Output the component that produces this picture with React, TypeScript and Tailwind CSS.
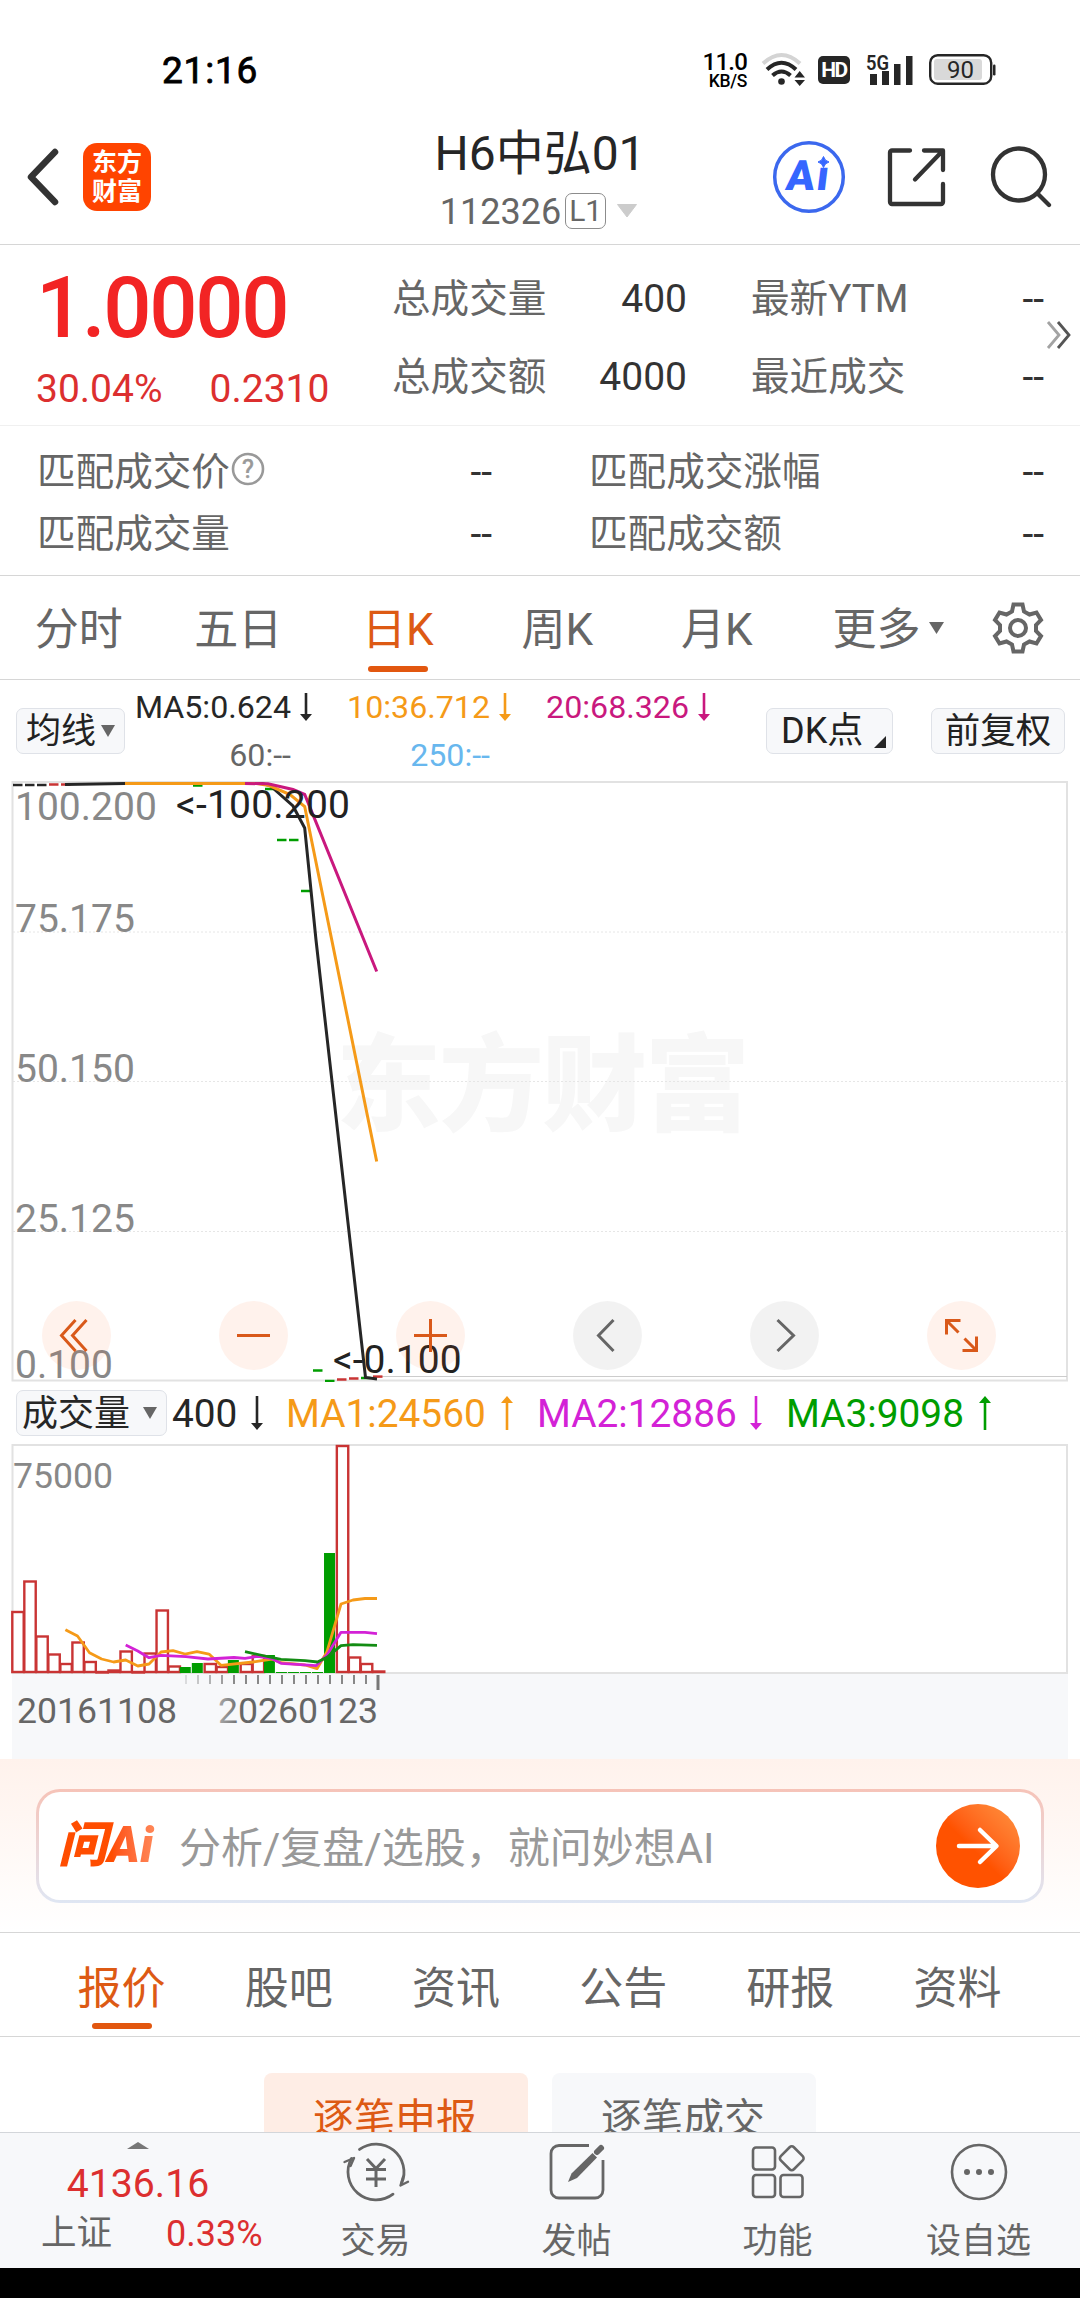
import React from 'react';
import clsx from 'clsx';

type Point = [number, number];

interface VolumeBar {
  top: number;
  up: boolean;
}

const INK = '#262626';
const ORANGE = '#f59a18';
const MAGENTA = '#c9187e';
const PURPLE = '#d322d6';
const GREEN = '#009d00';
const RED = '#c93434';

const toPath = (pts: Point[]) => pts.map((p) => p.join(',')).join(' ');

// moving averages of the daily K chart
const ma5: Point[] = [[65, 784.5], [125, 783.5], [262, 783.5], [270, 785.5], [293, 806], [304.7, 828], [316, 940], [365.5, 1377.5], [377, 1379]];
const ma10: Point[] = [[125, 783.5], [257, 783.5], [269, 785.5], [290, 794.5], [304.7, 806.5], [376.7, 1161.5]];
const ma20: Point[] = [[245, 783.5], [268, 783.8], [293, 789.5], [304.7, 794.5], [376.7, 971.5]];

// one day without a body: [x, y, colour]
const ticks: [number, number, string][] = [
  [13, 785, INK], [25, 785, INK], [37, 785, INK], [49, 784.5, RED], [61, 784.5, RED],
  [193, 785.5, GREEN], [265, 789, GREEN], [277, 840, GREEN], [289, 840, GREEN], [301, 891, GREEN],
  [313, 1370.5, GREEN], [325, 1381, GREEN], [337, 1379.5, RED], [349, 1378.5, RED], [361, 1378, GREEN], [373, 1376.6, RED],
];

const priceLabels: [string, number][] = [
  ['100.200', 819.7], ['75.175', 931.6], ['50.150', 1081.8], ['25.125', 1231.6], ['0.100', 1377.5],
];

const volumes: VolumeBar[] = [
  { top: 1612, up: true }, { top: 1581.5, up: true }, { top: 1636.5, up: true }, { top: 1654.5, up: true },
  { top: 1664, up: true }, { top: 1642.5, up: true }, { top: 1662, up: true }, { top: 1672, up: true },
  { top: 1670.5, up: true }, { top: 1651.5, up: true }, { top: 1672, up: true }, { top: 1653.5, up: true },
  { top: 1610.5, up: true }, { top: 1666.5, up: true }, { top: 1667, up: false }, { top: 1663, up: false },
  { top: 1664, up: true }, { top: 1667, up: true }, { top: 1660, up: false }, { top: 1664, up: true },
  { top: 1656, up: true }, { top: 1655, up: false }, { top: 1672, up: false }, { top: 1672, up: false },
  { top: 1672, up: false }, { top: 1672, up: false }, { top: 1553, up: false }, { top: 1446, up: true },
  { top: 1657.5, up: true }, { top: 1664, up: true }, { top: 1671.5, up: true },
];

const vma1: Point[] = [
  [65.4, 1629.7], [77.5, 1636], [89.5, 1652.7], [101.6, 1659], [113.6, 1662], [125.7, 1660], [137.8, 1666], [149, 1664],
  [161, 1652], [173, 1650.7], [185, 1654], [197, 1651.7], [209, 1654], [221, 1665.3], [253, 1662], [272, 1659],
  [281, 1662.7], [305, 1665], [317, 1668.7], [327, 1651.7], [341, 1604], [353, 1600], [365, 1598.5], [377, 1598.5],
];
const vma2: Point[] = [
  [125.7, 1645], [137.8, 1651], [149, 1657.7], [161, 1655.3], [186, 1656.7], [208, 1659], [234, 1657.5], [245, 1658.3],
  [258, 1656.3], [272, 1658.7], [281, 1663.3], [316, 1665.7], [327, 1655], [341, 1632.3], [365, 1632.3], [377, 1633.7],
];
const vma3: Point[] = [
  [245, 1651.7], [265, 1656], [281, 1659.3], [305, 1660.7], [317.5, 1662], [327, 1657.3], [341, 1645.7], [353, 1644.7], [377, 1645.3],
];

function Arrow({ up = false, height = 28 }: { up?: boolean; height?: number }) {
  return (
    <svg width="12" height={height} viewBox={`0 0 12 ${height}`} className={clsx('shrink-0', up && 'rotate-180')}>
      <path d={`M6 0V${height - 4}`} stroke="currentColor" strokeWidth="2.6" />
      <path d={`M0 ${height - 7}H12L6 ${height}Z`} fill="currentColor" />
    </svg>
  );
}

function Caret({ size = 14 }: { size?: number }) {
  return (
    <svg width={size} height="12" viewBox="0 0 14 12" preserveAspectRatio="none" className="shrink-0">
      <path d="M0 0H14L7 12Z" fill="#666" />
    </svg>
  );
}

function StatusBar() {
  return (
    <div className="flex h-[113px] items-center pt-[27px] text-black">
      <span className="ml-[162px] w-[541px] text-[37px] leading-none tracking-[0.8px] [-webkit-text-stroke:0.8px_#000]">21:16</span>
      <div className="flex h-[38px] w-[44px] flex-col items-end justify-between">
        <span className="text-[24px] leading-[22px] font-medium tracking-[-0.8px]">11.0</span>
        <span className="text-[17.5px] leading-[16px] font-medium tracking-[-0.3px]">KB/S</span>
      </div>
      <svg width="46" height="36" viewBox="0 0 46 36" fill="none" className="ml-[14px]">
        <path d="M2 11.5Q20.5 -5.5 39 11.5" stroke="#d4d4d4" strokeWidth="4" />
        <path d="M6 17.5Q20.5 4 35 17.5" stroke="#262626" strokeWidth="4" />
        <path d="M11.5 23.5Q20.5 15.5 29.5 23.5" stroke="#262626" strokeWidth="4" />
        <circle cx="20.5" cy="29.5" r="3.3" fill="#262626" />
        <path d="M33.5 25.5H44L38.7 19ZM33.5 28H44L38.7 34Z" fill="#262626" />
      </svg>
      <span className="ml-[11px] flex h-[28px] w-[32px] items-center justify-center rounded-[5px] bg-[#262626] text-[21px] leading-none font-bold tracking-[-1.5px] text-white">
        HD
      </span>
      <svg width="48" height="34" viewBox="0 0 48 34" className="ml-[16px]" fontFamily="Roboto, sans-serif">
        <text x="0" y="16.5" fontSize="20" fontWeight="600" fill="#262626" textLength="23" lengthAdjust="spacingAndGlyphs">5G</text>
        <path d="M4 21h7v11H4zM16 18h7v14h-7zM28 11h6.5v21H28zM40 3h6.5v29H40z" fill="#262626" />
      </svg>
      <svg width="68" height="32" viewBox="0 0 68 32" className="ml-[15px]" fontFamily="Roboto, sans-serif">
        <rect x="1.2" y="1.2" width="61" height="28.5" rx="7.5" fill="none" stroke="#262626" strokeWidth="2.4" />
        <rect x="5" y="5" width="48" height="21" rx="3" fill="#d9d9d9" />
        <rect x="64" y="10.5" width="2.5" height="11" rx="1.2" fill="#262626" />
        <text x="31.5" y="24" fontSize="24" textAnchor="middle" fill="#262626">90</text>
      </svg>
    </div>
  );
}

function Header() {
  return (
    <header className="flex h-[132px] items-start border-b border-[#d6d6d6] pt-[11px]">
      <div className="flex h-[106px] w-[380px] items-center">
        <svg width="34" height="58" viewBox="0 0 34 58" className="ml-[25px]" fill="none">
          <path d="M30 4L6 29L30 54" stroke="#333" strokeWidth="6.5" strokeLinecap="round" strokeLinejoin="round" />
        </svg>
        <div className="ml-[24px] flex h-[68px] w-[68px] flex-col items-center justify-center rounded-[14px] bg-[#ff4400] text-[25px] leading-[29px] font-bold text-white">
          <span>东方</span>
          <span>财富</span>
        </div>
      </div>
      <div className="flex w-[318px] flex-col items-center">
        <h1 className="flex h-[58px] items-center pt-[2px] pl-[2px] text-[48px] leading-none text-[#262626]">H6中弘01</h1>
        <div className="flex h-[58px] items-center text-[#666]">
          <span className="pt-[1px] text-[36px] leading-none">112326</span>
          <span className="ml-[4px] flex h-[36px] w-[41px] items-center justify-center rounded-[7px] border border-[#8c8c8c] text-[30px] leading-none">
            L1
          </span>
          <svg width="22" height="14" viewBox="0 0 22 14" className="ml-[10px]">
            <path d="M1.5 0.5H20.5L11 13Z" fill="#ccc" stroke="#ccc" strokeLinejoin="round" />
          </svg>
        </div>
      </div>
      <div className="flex h-[106px] items-center">
        <svg width="74" height="74" viewBox="0 0 74 74" className="ml-[74px]" fontFamily="Roboto, sans-serif">
          <circle cx="37" cy="37" r="34.3" fill="none" stroke="#3b68ee" strokeWidth="3.5" />
          <text x="19" y="50.5" fontSize="42" fontWeight="900" letterSpacing="2" transform="skewX(-7)" fill="#3566ff">Ai</text>
          <rect x="43" y="14" width="16" height="13" fill="#fff" />
          <path d="M51.5 16.5Q52.7 21 57 22Q52.7 23 51.5 27.5Q50.3 23 46 22Q50.3 21 51.5 16.5Z" fill="#3566ff" stroke="#3566ff" />
        </svg>
        <svg width="62" height="62" viewBox="0 0 62 62" className="ml-[39px]" fill="none" stroke="#333" strokeWidth="4.3" strokeLinecap="round" strokeLinejoin="round">
          <path d="M25 4.5H7A2 2 0 0 0 5 6.5V56A2 2 0 0 0 7 58H56A2 2 0 0 0 58 56V38" />
          <path d="M39 4.5H58V24M57 5.5L30 33.5" />
        </svg>
        <svg width="66" height="62" viewBox="0 0 66 62" className="ml-[42px]" fill="none" stroke="#333" strokeWidth="4.3" strokeLinecap="round">
          <circle cx="30" cy="28.5" r="26" />
          <path d="M48.5 47.5L60 59" />
        </svg>
      </div>
    </header>
  );
}

function Stat({ label, value, help = false }: { label: string; value: string; help?: boolean }) {
  return (
    <div className="flex items-center justify-between text-[39px] leading-none">
      <span className="flex items-center text-[38.6px] text-[#666]">
        <span>{label}</span>
        {help && (
          <svg width="34" height="34" viewBox="0 0 34 34" className="-mt-[7px] ml-[1px]" fontFamily="Roboto, sans-serif">
            <circle cx="17" cy="17" r="15" fill="none" stroke="#999" strokeWidth="2.6" />
            <text x="17" y="25.5" fontSize="25" textAnchor="middle" fill="#999" stroke="#999" strokeWidth="0.6">?</text>
          </svg>
        )}
      </span>
      <span className="text-[#333]">{value}</span>
    </div>
  );
}

function Quote() {
  return (
    <>
      <section className="flex h-[181px] border-b border-[#f0f0f0]">
        <div className="w-[392px] pt-[19px] text-[#f22424]">
          <div className="ml-[36px] flex h-[88px] items-center text-[85px] leading-none font-medium tracking-[-2.3px]">1.0000</div>
          <div className="mt-[5px] ml-[36px] flex h-[64px] items-center gap-[47px] text-[39px] leading-none text-[#dc2f2f]">
            <span>30.04%</span>
            <span>0.2310</span>
          </div>
        </div>
        <div className="grid grid-cols-[295px_293px] grid-rows-[78px_78px] gap-x-[64px] pt-[15px]">
          <Stat label="总成交量" value="400" />
          <Stat label="最新YTM" value="--" />
          <Stat label="总成交额" value="4000" />
          <Stat label="最近成交" value="--" />
        </div>
        <svg width="26" height="30" viewBox="0 0 26 30" className="ml-[2px] self-center" fill="none" strokeWidth="2.8">
          <path d="M2 2L13 15L2 28" stroke="#a3a3a3" />
          <path d="M12 2L23 15L12 28" stroke="#555" />
        </svg>
      </section>
      <section className="grid h-[150px] grid-cols-[455px_455px] grid-rows-[62px_62px] gap-x-[97px] border-b border-[#d6d6d6] pt-[15px] pl-[37px]">
        <Stat label="匹配成交价" value="--" help />
        <Stat label="匹配成交涨幅" value="--" />
        <Stat label="匹配成交量" value="--" />
        <Stat label="匹配成交额" value="--" />
      </section>
    </>
  );
}

function PeriodTabs() {
  const periods = ['分时', '五日', '日K', '周K', '月K'];
  return (
    <nav className="flex h-[104px] items-center border-b border-[#d6d6d6] text-[44px] leading-none text-[#666]">
      {periods.map((p) => (
        <div key={p} className="relative flex h-full w-[159.5px] items-center justify-center pt-[5px] pr-[2px]">
          <span className={clsx(p === '日K' && 'text-[#dd5a14]')}>{p}</span>
          {p === '日K' && <span className="absolute bottom-[7px] left-[49px] h-[6px] w-[60px] rounded-full bg-[#e2570f]" />}
        </div>
      ))}
      <div className="ml-[35px] flex items-center gap-[8px] pt-[5px]">
        <span>更多</span>
        <span className="-mt-[5px] flex"><Caret size={15} /></span>
      </div>
      <svg width="54" height="54" viewBox="0 0 54 54" className="ml-[47px]" fill="none" stroke="#666" strokeWidth="4">
        <path
          strokeLinejoin="miter"
          d="M22.5 3.5H31.5L33 10.5L38.5 13.5L45.5 11.5L50 19L45 24V30L50 35L45.5 42.5L38.5 40.5L33 43.5L31.5 50.5H22.5L21 43.5L15.5 40.5L8.5 42.5L4 35L9 30V24L4 19L8.5 11.5L15.5 13.5L21 10.5Z"
        />
        <circle cx="27" cy="27" r="8" />
      </svg>
    </nav>
  );
}

function MaCell({ text, color, arrow = false }: { text: string; color: string; arrow?: boolean }) {
  return (
    <div className={clsx('flex items-center', color)}>
      <span className="w-[165px] pt-[1px] text-right whitespace-nowrap">{text}</span>
      {arrow && <span className="ml-[9px]"><Arrow /></span>}
    </div>
  );
}

function MaToolbar() {
  return (
    <div className="flex h-[101px] items-center text-[#222]">
      <div className="ml-[16px] flex h-[46px] w-[109px] items-center gap-[5px] rounded-[7px] border border-[#dfe2e8] bg-[#f7f8fa] pl-[9px] text-[35px] leading-none">
        <span className="pt-[2px]">均线</span>
        <Caret />
      </div>
      <div className="ml-[1px] grid grid-cols-[199px_199px_199px] grid-rows-[48px_48px] text-[32.2px] leading-none">
        <MaCell text="MA5:0.624" color="text-[#262626]" arrow />
        <MaCell text="10:36.712" color="text-[#f59a18]" arrow />
        <MaCell text="20:68.326" color="text-[#c9187e]" arrow />
        <MaCell text="60:--" color="text-[#666]" />
        <MaCell text="250:--" color="text-[#68b7ee]" />
      </div>
      <div className="relative ml-[43px] flex h-[46px] w-[127px] items-center rounded-[7px] border border-[#dfe2e8] bg-[#f7f8fa] pt-[1px] pl-[14px] text-[36px] leading-none">
        DK点
        <svg width="12" height="12" viewBox="0 0 12 12" className="absolute right-[6px] bottom-[5px]">
          <path d="M12 0V12H0Z" fill="#262626" />
        </svg>
      </div>
      <div className="ml-[38px] flex h-[46px] w-[134px] items-center justify-center rounded-[7px] border border-[#dfe2e8] bg-[#f7f8fa] pt-[2px] text-[35.5px] leading-none">
        前复权
      </div>
    </div>
  );
}

const controls: { key: string; warm: boolean; d: string }[] = [
  { key: 'first', warm: true, d: 'M-1 -15.5L-15 0L-1 15.5M10 -15.5L-4 0L10 15.5' },
  { key: 'minus', warm: true, d: 'M-16.5 0H16.5' },
  { key: 'plus', warm: true, d: 'M-16.5 0H16.5M0 -16.5V16.5' },
  { key: 'prev', warm: false, d: 'M6 -15.5L-9 0L6 15.5' },
  { key: 'next', warm: false, d: 'M-7 -15.5L9 0L-7 15.5' },
  { key: 'full', warm: true, d: 'M-15 -1V-15H-1M-15 -15L-3 -3M15 1V15H1M15 15L3 3' },
];

function PriceChart() {
  return (
    <div className="relative h-[601px]">
      <svg width="1080" height="601" viewBox="0 781 1080 601" className="block" fontFamily="Roboto, 'Noto Sans CJK SC', sans-serif" fontSize="39">
        <text x="543" y="1122" fontSize="105" fontWeight="900" textAnchor="middle" textLength="414" fill="#f7f7f7">东方财富</text>
        {[932, 1081.5, 1231.5].map((y) => (
          <path key={y} d={`M13 ${y}H1067`} stroke="#e6e6e6" strokeDasharray="2 2" />
        ))}
        <rect x="12.5" y="782" width="1054.5" height="598.5" fill="none" stroke="#e2e2e2" strokeWidth="2" />
        <path d="M380 1376.5H1067" stroke="#ccc" />
        {priceLabels.map(([label, y]) => (
          <text key={label} x="15" y={y} fill="#888">{label}</text>
        ))}
        {ticks.map(([x, y, color]) => (
          <path key={x} d={`M${x} ${y}h9.5`} stroke={color} strokeWidth="2.5" />
        ))}
        <g fill="none" strokeWidth="3">
          <polyline points={toPath(ma5)} stroke={INK} />
          <polyline points={toPath(ma10)} stroke={ORANGE} />
          <polyline points={toPath(ma20)} stroke={MAGENTA} />
        </g>
        <g fill="#222">
          <text x="176" y="818" textLength="174">&lt;-100.200</text>
          <text x="333" y="1373">&lt;-0.100</text>
        </g>
      </svg>
      <div className="absolute top-[520px] left-[42px] flex gap-[108px]">
        {controls.map((c) => (
          <svg
            key={c.key}
            width="69"
            height="69"
            viewBox="-34.5 -34.5 69 69"
            className={clsx('rounded-full', c.warm ? 'bg-[#ff5a14]/8 text-[#d9591a]' : 'bg-black/5 text-[#666]')}
          >
            <path d={c.d} fill="none" stroke="currentColor" strokeWidth="3" />
          </svg>
        ))}
      </div>
    </div>
  );
}

function VolumeHeader() {
  return (
    <div className="flex h-[62px] items-center text-[38.8px] leading-none text-[#262626]">
      <div className="ml-[16px] flex h-[46px] w-[151px] items-center justify-between rounded-[7px] border border-[#dfe2e8] bg-[#f7f8fa] pr-[9px] pl-[5px] text-[36px] leading-none">
        <span className="pt-[2px]">成交量</span>
        <Caret />
      </div>
      <span className="ml-[5px] w-[79px] pt-[2px]">400</span>
      <Arrow height={34} />
      <span className="ml-[23px] w-[215px] pt-[2px] text-[#f59a18]">MA1:24560</span>
      <span className="text-[#f59a18]"><Arrow up height={34} /></span>
      <span className="ml-[24px] w-[213px] pt-[2px] text-[#d322d6]">MA2:12886</span>
      <span className="text-[#d322d6]"><Arrow height={34} /></span>
      <span className="ml-[24px] w-[193px] pt-[2px] text-[#009d00]">MA3:9098</span>
      <span className="text-[#009d00]"><Arrow up height={34} /></span>
    </div>
  );
}

function VolumeChart() {
  return (
    <svg width="1080" height="315" viewBox="0 1444 1080 315" className="block" fontFamily="Roboto, sans-serif" fontSize="35.6">
      <defs>
        <linearGradient id="date-fade" x1="0" x2="1" y1="0" y2="0">
          <stop offset="0" stopColor="#aaa" />
          <stop offset="0.15" stopColor="#666" />
        </linearGradient>
      </defs>
      <rect x="12" y="1674" width="1056" height="85" fill="#f7f8fa" />
      <rect x="12.5" y="1445" width="1054.5" height="228" fill="none" stroke="#e2e2e2" strokeWidth="2" />
      <text x="13" y="1487.7" fill="#888">75000</text>
      {volumes.map((v, i) => {
        const x = 11.5 + i * 12.02;
        return v.up ? (
          <rect key={i} x={x + 0.8} y={v.top} width="11.4" height={Math.max(1672 - v.top, 0.5)} fill="#fff" stroke={RED} strokeWidth="2.4" />
        ) : (
          <rect key={i} x={x} y={v.top} width="11" height={1673 - v.top} fill={GREEN} />
        );
      })}
      <g fill="none" strokeWidth="2.8" strokeLinejoin="round">
        <polyline points={toPath(vma1)} stroke={ORANGE} />
        <polyline points={toPath(vma2)} stroke={PURPLE} />
        <polyline points={toPath(vma3)} stroke="#138c13" />
      </g>
      {Array.from({ length: 16 }, (_, i) => (
        <path key={i} d={`M${186 + i * 12} 1675v9`} stroke="#888" strokeWidth="2" opacity={Math.min(1, 0.25 + i * 0.18)} />
      ))}
      <path d="M378 1675v15" stroke="#777" strokeWidth="3" />
      <text x="17" y="1722.7" fill="#666">20161108</text>
      <text x="218" y="1722.7" fill="url(#date-fade)">20260123</text>
    </svg>
  );
}

function AskAi() {
  return (
    <section className="h-[173px] bg-linear-to-b from-[#fff2ec] to-white px-[36px] pt-[30px]">
      <div className="h-[114px] rounded-[24px] bg-linear-to-b from-[#f6c3b8] to-[#dfe6f3] p-[3px]">
        <div className="flex h-full items-center rounded-[21px] bg-white pr-[21px] pl-[19px]">
          <span className="w-[108px] bg-linear-to-r from-[#ff4d00] from-50% to-[#ff9466] bg-clip-text text-[49px] leading-[64px] font-black tracking-[0.5px] whitespace-nowrap text-transparent italic">
            问Ai
          </span>
          <span className="ml-[13px] flex-1 pt-[5px] text-[42px] leading-none text-[#999]">分析/复盘/选股，就问妙想AI</span>
          <span className="flex h-[84px] w-[84px] items-center justify-center rounded-full bg-linear-to-tr from-[#ff5200] from-45% to-[#ff9440]">
            <svg width="44" height="40" viewBox="0 0 44 40" fill="none" stroke="#fff" strokeWidth="4.5" strokeLinecap="round" strokeLinejoin="round">
              <path d="M3 20H40M24 4L40.5 20L24 36" />
            </svg>
          </span>
        </div>
      </div>
    </section>
  );
}

function InfoTabs() {
  const tabs = ['报价', '股吧', '资讯', '公告', '研报', '资料'];
  return (
    <nav className="flex h-[105px] border-y border-[#d6d6d6] pl-[38px] text-[44px] leading-none text-[#666]">
      {tabs.map((t, i) => (
        <div key={t} className="relative flex w-[167.2px] items-center justify-center pt-[8px]">
          <span className={clsx(i === 0 && 'text-[#dd5a14]')}>{t}</span>
          {i === 0 && <span className="absolute bottom-[7px] left-[54px] h-[6px] w-[60px] rounded-full bg-[#e2570f]" />}
        </div>
      ))}
    </nav>
  );
}

function BottomBar() {
  return (
    <footer className="flex h-[136px] border-t border-[#d3d6da] bg-[#f7f8fa] text-[#666]">
      <div className="w-[275px]">
        <svg width="22" height="7" viewBox="0 0 22 7" className="mt-[9px] ml-[127px] block">
          <path d="M0 7H22L11 0Z" fill="#777" />
        </svg>
        <div className="mt-[15px] ml-[1px] flex h-[42px] items-center justify-center text-[39.2px] leading-none text-[#dc2f2f]">4136.16</div>
        <div className="mt-[7px] ml-[41px] flex h-[42px] items-center leading-none">
          <span className="w-[125px] text-[35.5px]">上证</span>
          <span className="text-[36px] text-[#dc2f2f]">0.33%</span>
        </div>
      </div>
      <div className="flex flex-1 text-[35px] leading-none">
        <div className="flex w-[201px] flex-col items-center pt-[7px]">
          <svg width="68" height="64" viewBox="-1 0 68 64" fill="none" stroke="#666" strokeWidth="2.8" strokeLinecap="round">
            <path d="M16.5 9.4A28 28 0 0 1 58.7 43.1M50 54.2A28 28 0 0 1 8.5 18.4" />
            <path d="M1.500 22L11 18L7.500 26M65 41.700L57.500 45.500L60 37" strokeWidth="2.4" strokeLinejoin="round" />
            <path d="M24 19L33 28.5L42 19M23 29.5H43M23 39H43M33 29V47" strokeWidth="3" strokeLinecap="butt" />
          </svg>
          <span className="mt-[20px]">交易</span>
        </div>
        <div className="flex w-[201px] flex-col items-center pt-[7px]">
          <svg width="60" height="64" viewBox="0 0 60 64" fill="none" stroke="#666" strokeWidth="2.8">
            <path d="M42 5.5H12A8 8 0 0 0 4 13.5V50A8 8 0 0 0 12 58H48A8 8 0 0 0 56 50V20" />
            <path d="M45.5 13L50 17.5L30 38L21 42L24.5 33.5Z" fill="#666" stroke="none" />
            <path d="M50 12L54 8" strokeWidth="6" strokeLinecap="round" />
          </svg>
          <span className="mt-[20px]">发帖</span>
        </div>
        <div className="flex w-[201px] flex-col items-center pt-[7px]">
          <svg width="60" height="64" viewBox="0 0 60 64" fill="none" stroke="#666" strokeWidth="2.6">
            <rect x="5" y="7.5" width="22" height="22" rx="3" />
            <rect x="5" y="35" width="22" height="22" rx="3" />
            <rect x="32.5" y="35" width="22" height="22" rx="3" />
            <rect x="34.5" y="9" width="18.5" height="18.5" rx="3" transform="rotate(45 43.75 18.25)" />
          </svg>
          <span className="mt-[20px]">功能</span>
        </div>
        <div className="flex w-[201px] flex-col items-center pt-[7px]">
          <svg width="60" height="64" viewBox="0 0 60 64" fill="none" stroke="#666" strokeWidth="2.6">
            <circle cx="30" cy="32" r="27" />
            <g fill="#666" stroke="none">
              <circle cx="18" cy="32" r="3" />
              <circle cx="30" cy="32" r="3" />
              <circle cx="42" cy="32" r="3" />
            </g>
          </svg>
          <span className="mt-[20px]">设自选</span>
        </div>
      </div>
    </footer>
  );
}

export default function App() {
  return (
    <div className="flex h-[2298px] w-[1080px] flex-col overflow-hidden bg-white font-[Roboto,'Noto_Sans_CJK_SC',sans-serif] *:shrink-0">
      <StatusBar />
      <Header />
      <Quote />
      <PeriodTabs />
      <MaToolbar />
      <PriceChart />
      <VolumeHeader />
      <VolumeChart />
      <AskAi />
      <InfoTabs />
      <div className="flex h-[95px] justify-center gap-[24px] overflow-hidden pt-[36px] text-[41px] leading-none">
        <div className="h-[80px] w-[264px] rounded-[8px] bg-[#feede5] pt-[26px] pr-[2px] text-center text-[#dd5a14]">逐笔申报</div>
        <div className="h-[80px] w-[264px] rounded-[8px] bg-[#f7f8fa] pt-[26px] pr-[2px] text-center text-[#666]">逐笔成交</div>
      </div>
      <BottomBar />
      <div className="h-[30px] bg-black" />
    </div>
  );
}
